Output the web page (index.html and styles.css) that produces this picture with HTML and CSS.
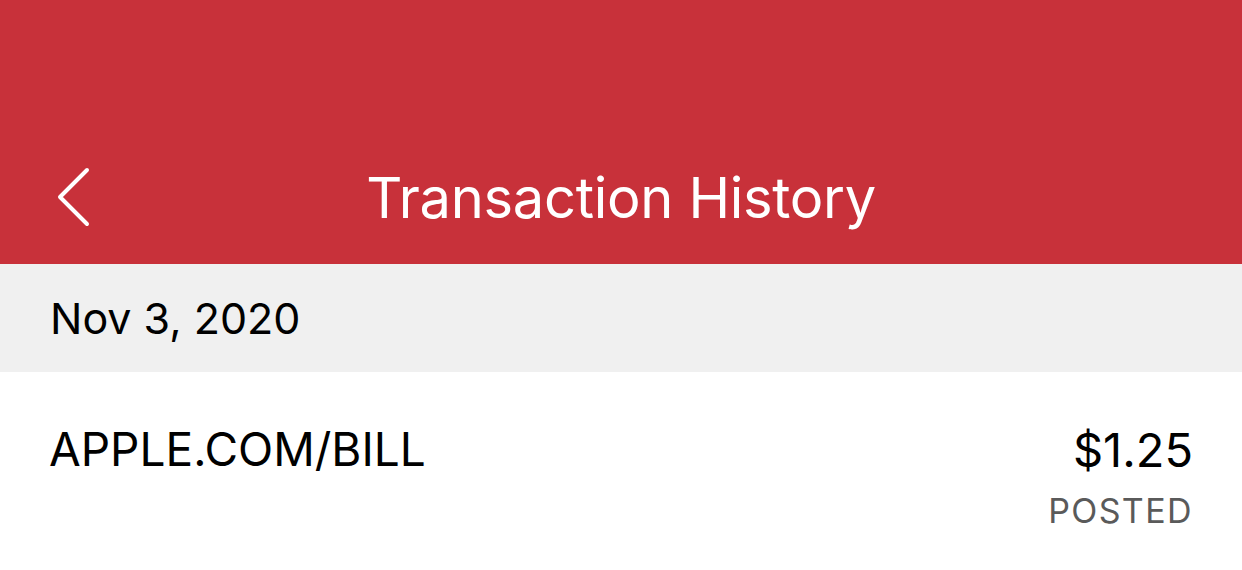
FILE: index.html
```html
<html>
<head>
  <title>Transaction History</title>
  <link rel="stylesheet" href="styles.css">
</head>
<body>
  <div class="header">
    <div class="navbar">
      <a class="back" href="#">
        <svg width="40" height="64" viewBox="0 0 40 64">
          <path d="M30 4 L3 31 L30 58" fill="none" stroke="#fff" stroke-width="4" stroke-linecap="round" stroke-linejoin="round"/>
        </svg>
      </a>
      <h1>Transaction History</h1>
    </div>
  </div>

  <div class="date-row">Nov 3, 2020</div>

  <div class="txn">
    <div class="txn-name">APPLE.COM/BILL</div>
    <div class="txn-right">
      <div class="txn-amount">$1.25</div>
      <div class="txn-status">POSTED</div>
    </div>
  </div>
</body>
</html>
```

FILE: styles.css
```css
body {
  margin: 0;
  font-family: Inter, "Noto Sans", sans-serif;
  background: #fff;
  color: #000;
}
.header {
  background-color: #C8313A;
  padding-top: 132px;
}
.navbar {
  height: 132px;
  display: flex;
  align-items: center;
  justify-content: center;
  position: relative;
}
.back {
  position: absolute;
  left: 57px;
  top: 34px;
  display: block;
  width: 40px;
  height: 64px;
}
.back svg {
  display: block;
}
.navbar h1 {
  margin: 0;
  color: #fff;
  font-size: 56px;
  font-weight: 400;
  letter-spacing: -0.3px;
}
.date-row {
  background-color: #F0F0F0;
  height: 108px;
  display: flex;
  align-items: center;
  padding-left: 50px;
  font-size: 43px;
}
.txn {
  display: flex;
  justify-content: space-between;
  padding: 49px 49px 0 49px;
}
.txn-name {
  font-size: 46px;
}
.txn-right {
  text-align: right;
}
.txn-amount {
  font-size: 47px;
}
.txn-status {
  font-size: 34px;
  color: #5a5a5a;
  letter-spacing: 1.4px;
  margin-top: 12px;
}
```
